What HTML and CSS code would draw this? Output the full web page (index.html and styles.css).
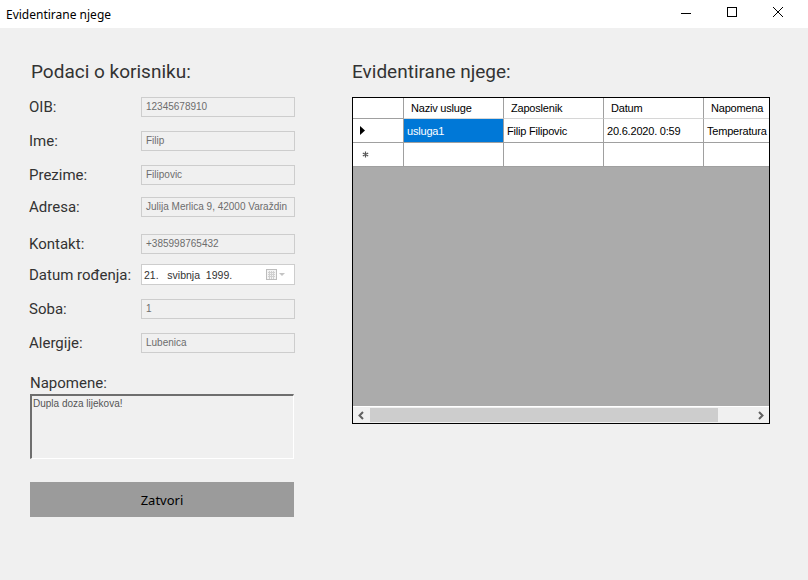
FILE: index.html
```html
<!DOCTYPE html>
<html>
<head>
<meta charset="utf-8">
<link rel="stylesheet" href="styles.css">
</head>
<body>
<div class="titlebar">
  <span class="title">Evidentirane njege</span>
  <div class="controls">
    <svg class="ctl" width="46" height="28" viewBox="0 0 46 28"><line x1="11" y1="13.5" x2="21" y2="13.5" stroke="#000" stroke-width="1"/></svg>
    <svg class="ctl" width="46" height="28" viewBox="0 0 46 28"><rect x="11.5" y="7.5" width="9" height="9" fill="none" stroke="#000" stroke-width="1"/></svg>
    <svg class="ctl" width="46" height="28" viewBox="0 0 46 28"><path d="M11 7 L21 17 M21 7 L11 17" stroke="#000" stroke-width="1"/></svg>
  </div>
</div>
<div class="main">
  <section class="left">
    <h2 class="heading">Podaci o korisniku:</h2>
    <div class="form">
      <label>OIB:</label><div class="box">12345678910</div>
      <label>Ime:</label><div class="box">Filip</div>
      <label>Prezime:</label><div class="box">Filipovic</div>
      <label>Adresa:</label><div class="box">Julija Merlica 9, 42000 Varaždin</div>
      <label>Kontakt:</label><div class="box">+385998765432</div>
      <label>Datum rođenja:</label>
      <div class="box date"><span class="dtext">21.&nbsp;&nbsp; svibnja &nbsp;1999.</span>
        <svg width="20" height="12" viewBox="0 0 20 12"><rect x="0.5" y="0.5" width="10" height="10" fill="#f4f4f4" stroke="#bdbdbd"/><path d="M2 3.5h7M2 5.5h7M2 7.5h7M3.5 2v8M5.5 2v8M7.5 2v8" stroke="#d0d0d0" stroke-width="1"/><path d="M13 4 L19 4 L16 7 Z" fill="#c4c4c4"/></svg>
      </div>
      <label>Soba:</label><div class="box">1</div>
      <label>Alergije:</label><div class="box">Lubenica</div>
    </div>
    <div class="notes-label">Napomene:</div>
    <div class="notes">Dupla doza lijekova!</div>
    <div class="btn">Zatvori</div>
  </section>
  <section class="right">
    <h2 class="heading">Evidentirane njege:</h2>
    <div class="grid">
      <div class="rows">
        <div class="cell rh"></div><div class="cell hd">Naziv usluge</div><div class="cell hd">Zaposlenik</div><div class="cell hd">Datum</div><div class="cell hd">Napomena</div>
        <div class="cell rh"><svg width="6" height="9" viewBox="0 0 6 9"><path d="M0 0 L5 4.5 L0 9 Z" fill="#000"/></svg></div><div class="cell sel">usluga1</div><div class="cell">Filip Filipovic</div><div class="cell">20.6.2020. 0:59</div><div class="cell">Temperatura</div>
        <div class="cell rh"><svg class="star" width="7" height="7" viewBox="0 0 7 7"><path d="M3.5 0.5v6M0.8 2l5.4 3M0.8 5l5.4-3" stroke="#555" stroke-width="1.2"/></svg></div><div class="cell"></div><div class="cell"></div><div class="cell"></div><div class="cell"></div>
      </div>
      <div class="empty"></div>
      <div class="hscroll">
        <svg class="arr" width="17" height="17" viewBox="0 0 17 17"><path d="M10 5 L6.5 8.5 L10 12" fill="none" stroke="#606060" stroke-width="2"/></svg>
        <div class="track"><div class="thumb"></div></div>
        <svg class="arr" width="17" height="17" viewBox="0 0 17 17"><path d="M7 5 L10.5 8.5 L7 12" fill="none" stroke="#606060" stroke-width="2"/></svg>
      </div>
    </div>
  </section>
</div>
</body>
</html>
```
FILE: styles.css
```css
* { box-sizing: border-box; }
html, body { margin: 0; padding: 0; }
body {
  width: 808px;
  height: 580px;
  background: #f0f0f0;
  font-family: Roboto, "Liberation Sans", sans-serif;
  overflow: hidden;
}
.titlebar {
  height: 28px;
  background: #fff;
  display: flex;
  align-items: center;
  justify-content: space-between;
}
.title {
  font-family: "Noto Sans", "Open Sans", sans-serif;
  font-size: 12px;
  padding-left: 6px;
  color: #000;
}
.controls { display: flex; height: 28px; }
.ctl { display: block; }
.main {
  display: flex;
  height: 552px;
}
.heading {
  margin: 0;
  font-weight: 400;
  font-size: 19px;
  line-height: 22px;
  color: #333;
  height: 36px;
  padding-top: 33px;
  box-sizing: content-box;
}
.left {
  width: 352px;
  padding-left: 29px;
}
.left .heading { padding-left: 2px; }
.form {
  display: grid;
  grid-template-columns: 112px 154px;
  grid-template-rows: 34px 34px 32px 37px 31px 34px 34px 20px;
}
.form label {
  font-size: 15px;
  color: #333;
  height: 20px;
  line-height: 20px;
  white-space: nowrap;
}
.box {
  height: 20px;
  border: 1px solid #cdcdcd;
  background: #f0f0f0;
  font-family: "Liberation Sans", Arial, sans-serif;
  font-size: 10px;
  color: #6d6d6d;
  line-height: 18px;
  padding-left: 4px;
  white-space: nowrap;
  overflow: hidden;
}
.box.date {
  background: #fff;
  height: 21px;
  margin-top: -1px;
  display: flex;
  align-items: center;
  justify-content: space-between;
  color: #333;
  padding-left: 2px;
  padding-right: 8px;
  font-size: 10.5px;
}
.notes-label {
  font-size: 15px;
  color: #333;
  height: 20px;
  line-height: 20px;
  margin-top: 20px;
  padding-left: 1px;
}
.notes {
  margin-top: 1px;
  margin-left: 1px;
  width: 264px;
  height: 65px;
  border-top: 2px solid #6e6e6e;
  border-left: 2px solid #6e6e6e;
  border-right: 1px solid #fff;
  border-bottom: 1px solid #fff;
  font-family: "Liberation Sans", Arial, sans-serif;
  font-size: 10px;
  color: #555;
  padding: 2px 1px;
}
.btn {
  margin-top: 23px;
  margin-left: 1px;
  width: 264px;
  height: 35px;
  background: #9b9b9b;
  font-family: "Noto Sans", "Open Sans", sans-serif;
  font-size: 13px;
  color: #000;
  display: flex;
  align-items: center;
  justify-content: center;
}
.right {
  width: 418px;
}
.grid {
  width: 418px;
  height: 327px;
  border: 1px solid #000;
  background: #ababab;
  display: flex;
  flex-direction: column;
  overflow: hidden;
}
.rows {
  display: grid;
  grid-template-columns: 51px 100px 100px 100px 100px;
  grid-template-rows: 21px 24px 24px;
  width: 416px;
  overflow: hidden;
  background: #fff;
}
.cell {
  border-right: 1px solid #a0a0a0;
  border-bottom: 1px solid #a0a0a0;
  font-family: "Liberation Sans", Arial, sans-serif;
  font-size: 11px;
  letter-spacing: -0.2px;
  color: #000;
  padding-left: 3px;
  display: flex;
  align-items: center;
  white-space: nowrap;
  overflow: hidden;
  background: #fff;
}
.cell.hd { padding-left: 7px; border-bottom-color: #d6d6d6; }
.cell.rh { padding-left: 7px; }
.cell.sel { background: #0078d7; color: #fff; }
.star { display: block; margin-left: 2px; }
.empty { flex: 1; }
.hscroll {
  height: 17px;
  background: #f0f0f0;
  display: flex;
  border-top: 1px solid #fff;
}
.arr { display: block; flex: none; }
.track { flex: 1; display: flex; padding: 1px 0; }
.thumb { width: 348px; background: #cdcdcd; }
```
